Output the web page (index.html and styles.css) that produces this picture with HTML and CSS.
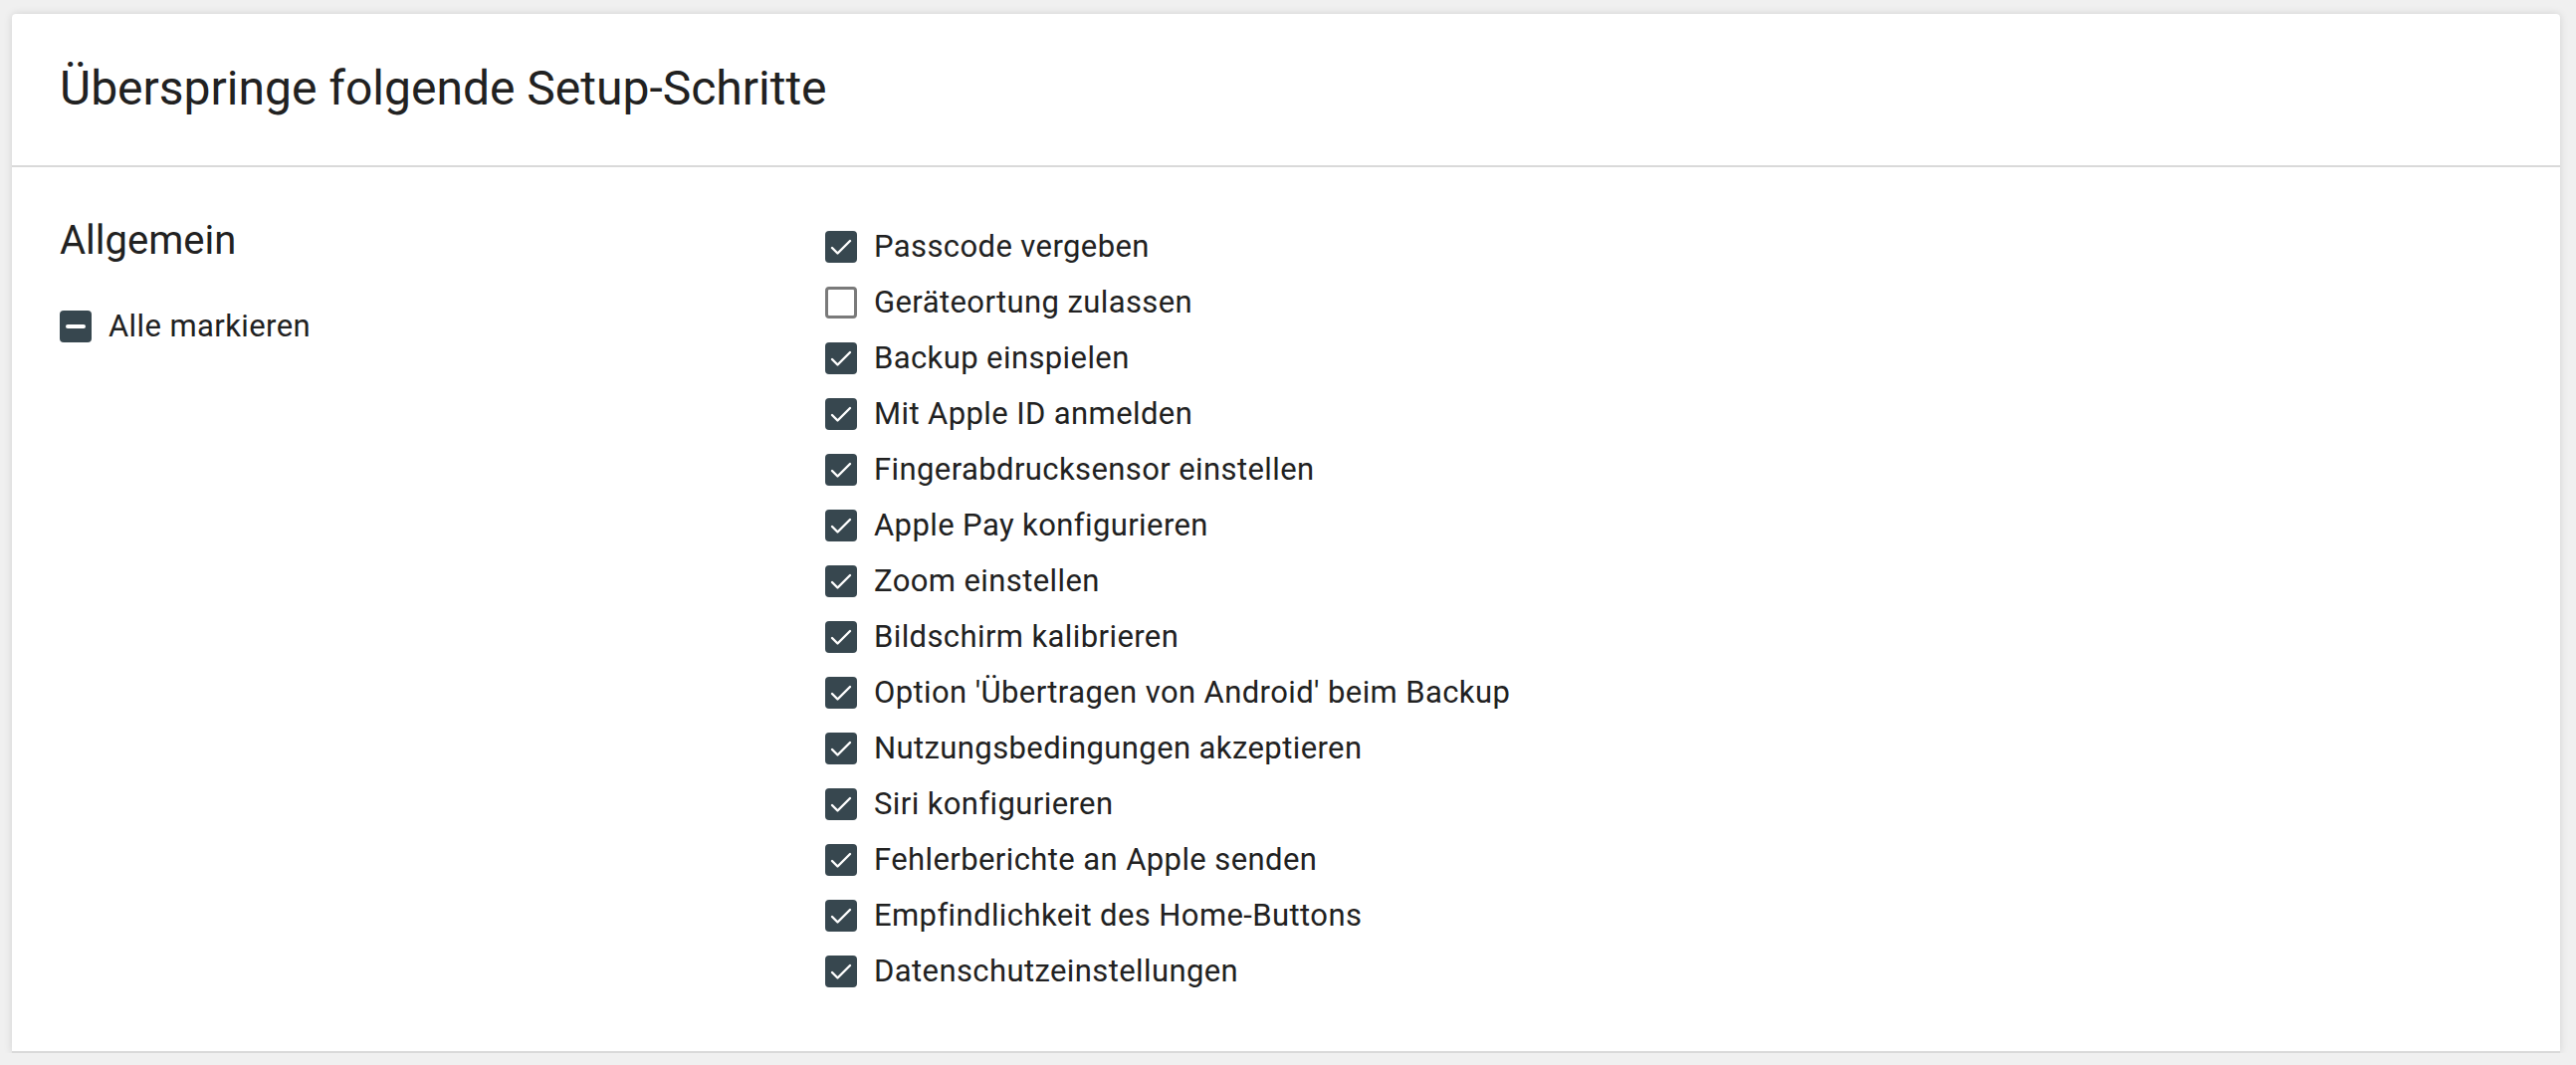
FILE: index.html
```html
<!DOCTYPE html>
<html lang="de">
<head>
<meta charset="utf-8">
<title>Setup-Schritte</title>
<link rel="stylesheet" href="styles.css">
</head>
<body>
<div class="card">
  <div class="card-header">
    <h1 class="title">Überspringe folgende Setup-Schritte</h1>
  </div>
  <div class="section">
    <div class="section-side">
      <h2 class="section-title">Allgemein</h2>
      <label class="row select-all"><span class="box box-indeterminate"><span class="dash"></span></span><span class="label">Alle markieren</span></label>
    </div>
    <ul class="list">
      <li class="row"><span class="box box-checked"><svg viewBox="0 0 32 32"><path d="M7 17 L12.5 22.5 L25 10"/></svg></span><span class="label">Passcode vergeben</span></li>
      <li class="row"><span class="box box-empty"></span><span class="label">Geräteortung zulassen</span></li>
      <li class="row"><span class="box box-checked"><svg viewBox="0 0 32 32"><path d="M7 17 L12.5 22.5 L25 10"/></svg></span><span class="label">Backup einspielen</span></li>
      <li class="row"><span class="box box-checked"><svg viewBox="0 0 32 32"><path d="M7 17 L12.5 22.5 L25 10"/></svg></span><span class="label">Mit Apple ID anmelden</span></li>
      <li class="row"><span class="box box-checked"><svg viewBox="0 0 32 32"><path d="M7 17 L12.5 22.5 L25 10"/></svg></span><span class="label">Fingerabdrucksensor einstellen</span></li>
      <li class="row"><span class="box box-checked"><svg viewBox="0 0 32 32"><path d="M7 17 L12.5 22.5 L25 10"/></svg></span><span class="label">Apple Pay konfigurieren</span></li>
      <li class="row"><span class="box box-checked"><svg viewBox="0 0 32 32"><path d="M7 17 L12.5 22.5 L25 10"/></svg></span><span class="label">Zoom einstellen</span></li>
      <li class="row"><span class="box box-checked"><svg viewBox="0 0 32 32"><path d="M7 17 L12.5 22.5 L25 10"/></svg></span><span class="label">Bildschirm kalibrieren</span></li>
      <li class="row"><span class="box box-checked"><svg viewBox="0 0 32 32"><path d="M7 17 L12.5 22.5 L25 10"/></svg></span><span class="label">Option 'Übertragen von Android' beim Backup</span></li>
      <li class="row"><span class="box box-checked"><svg viewBox="0 0 32 32"><path d="M7 17 L12.5 22.5 L25 10"/></svg></span><span class="label">Nutzungsbedingungen akzeptieren</span></li>
      <li class="row"><span class="box box-checked"><svg viewBox="0 0 32 32"><path d="M7 17 L12.5 22.5 L25 10"/></svg></span><span class="label">Siri konfigurieren</span></li>
      <li class="row"><span class="box box-checked"><svg viewBox="0 0 32 32"><path d="M7 17 L12.5 22.5 L25 10"/></svg></span><span class="label">Fehlerberichte an Apple senden</span></li>
      <li class="row"><span class="box box-checked"><svg viewBox="0 0 32 32"><path d="M7 17 L12.5 22.5 L25 10"/></svg></span><span class="label">Empfindlichkeit des Home-Buttons</span></li>
      <li class="row"><span class="box box-checked"><svg viewBox="0 0 32 32"><path d="M7 17 L12.5 22.5 L25 10"/></svg></span><span class="label">Datenschutzeinstellungen</span></li>
    </ul>
  </div>
</div>
</body>
</html>
```

FILE: styles.css
```css
html, body {
  margin: 0;
  padding: 0;
}
body {
  background: #f0f0f0;
  padding: 14px 16px 0 12px;
  font-family: Roboto, "Liberation Sans", Arial, sans-serif;
  color: #212121;
}
.card {
  background: #ffffff;
  border-radius: 4px 4px 0 0;
  box-shadow: 0 0 8px rgba(0, 0, 0, 0.13);
}
.card-header {
  padding: 47px 48px 49px 48px;
  border-bottom: 2px solid #d9d9d9;
}
.title {
  margin: 0;
  font-size: 48px;
  line-height: 56px;
  font-weight: 400;
}
.section {
  display: flex;
  padding: 50px 48px 52px 48px;
  border-bottom: 2px solid #d9d9d9;
}
.section-side {
  width: 769px;
  flex: none;
}
.section-title {
  margin: 0 0 34px 0;
  font-size: 40px;
  line-height: 48px;
  font-weight: 400;
}
.list {
  list-style: none;
  margin: 2px 0 0 0;
  padding: 0;
}
.row {
  display: flex;
  align-items: center;
  height: 56px;
  gap: 17px;
}
.label {
  font-size: 31px;
  letter-spacing: 0.4px;
  line-height: 56px;
}
.box {
  width: 32px;
  height: 32px;
  box-sizing: border-box;
  border-radius: 4px;
  flex: none;
  display: flex;
  align-items: center;
  justify-content: center;
}
.box-checked, .box-indeterminate {
  background: #37474f;
}
.box-empty {
  border: 3px solid #7a7a7a;
}
.box svg {
  width: 32px;
  height: 32px;
  fill: none;
  stroke: #ffffff;
  stroke-width: 2.4;
  stroke-linecap: round;
  stroke-linejoin: round;
}
.dash {
  width: 20px;
  height: 4px;
  border-radius: 2px;
  background: #ffffff;
}
```
